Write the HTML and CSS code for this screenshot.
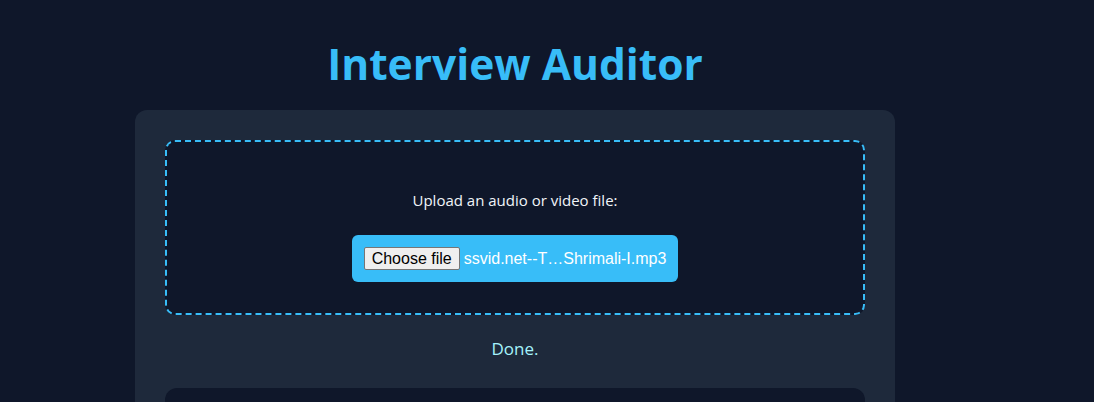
FILE: index.html
```html
<!DOCTYPE html>
<html>
<head>
<meta charset="utf-8">
<link rel="stylesheet" href="styles.css">
</head>
<body>
<div class="page">
  <h1 class="title">Interview Auditor</h1>
  <div class="card">
    <div class="dropzone">
      <label class="upload-label">Upload an audio or video file:</label>
      <div class="file-wrap">
        <span class="file-btn">Choose file</span>
        <span class="file-name">ssvid.net--T…Shrimali-I.mp3</span>
      </div>
    </div>
    <p class="status">Done.</p>
    <div class="results"></div>
  </div>
</div>
</body>
</html>
```
FILE: styles.css
```css
html, body {
  margin: 0;
  padding: 0;
  background: #0f172a;
  height: 100%;
  overflow: hidden;
}
body {
  font-family: "Open Sans", "Noto Sans", sans-serif;
  color: #e2e8f0;
}
.page {
  width: 760px;
  margin-left: 135px;
  padding-top: 33px;
}
.title {
  margin: 0 0 16px;
  text-align: center;
  color: #38bdf8;
  font-size: 42.5px;
  font-weight: 700;
  line-height: 61px;
}
.card {
  background: #1e293b;
  border-radius: 12px;
  padding: 30px 30px 0;
  height: 400px;
}
.dropzone {
  border: 2px dashed #38bdf8;
  border-radius: 10px;
  background: #0f172a;
  display: flex;
  flex-direction: column;
  align-items: center;
  padding-top: 48px;
  box-sizing: border-box;
  height: 175px;
}
.upload-label {
  font-size: 15px;
  color: #f1f5f9;
  line-height: 20px;
}
.file-wrap {
  margin-top: 25px;
  background: #38bdf8;
  border-radius: 6px;
  display: flex;
  align-items: center;
  padding: 12px;
  height: 47px;
  box-sizing: border-box;
  font-family: "Liberation Sans", Arial, sans-serif;
}
.file-btn {
  background: #efefef;
  border: 1px solid #767676;
  border-radius: 2px;
  color: #000;
  font-size: 16px;
  padding: 1px 7px;
  line-height: 19px;
}
.file-name {
  color: #fff;
  font-size: 16px;
  margin-left: 4px;
}
.status {
  text-align: center;
  color: #a5f3fc;
  font-size: 17px;
  margin: 22px 0 0;
  line-height: 23px;
}
.results {
  margin-top: 28px;
  background: #0f172a;
  border-radius: 12px;
  height: 100px;
}
```
